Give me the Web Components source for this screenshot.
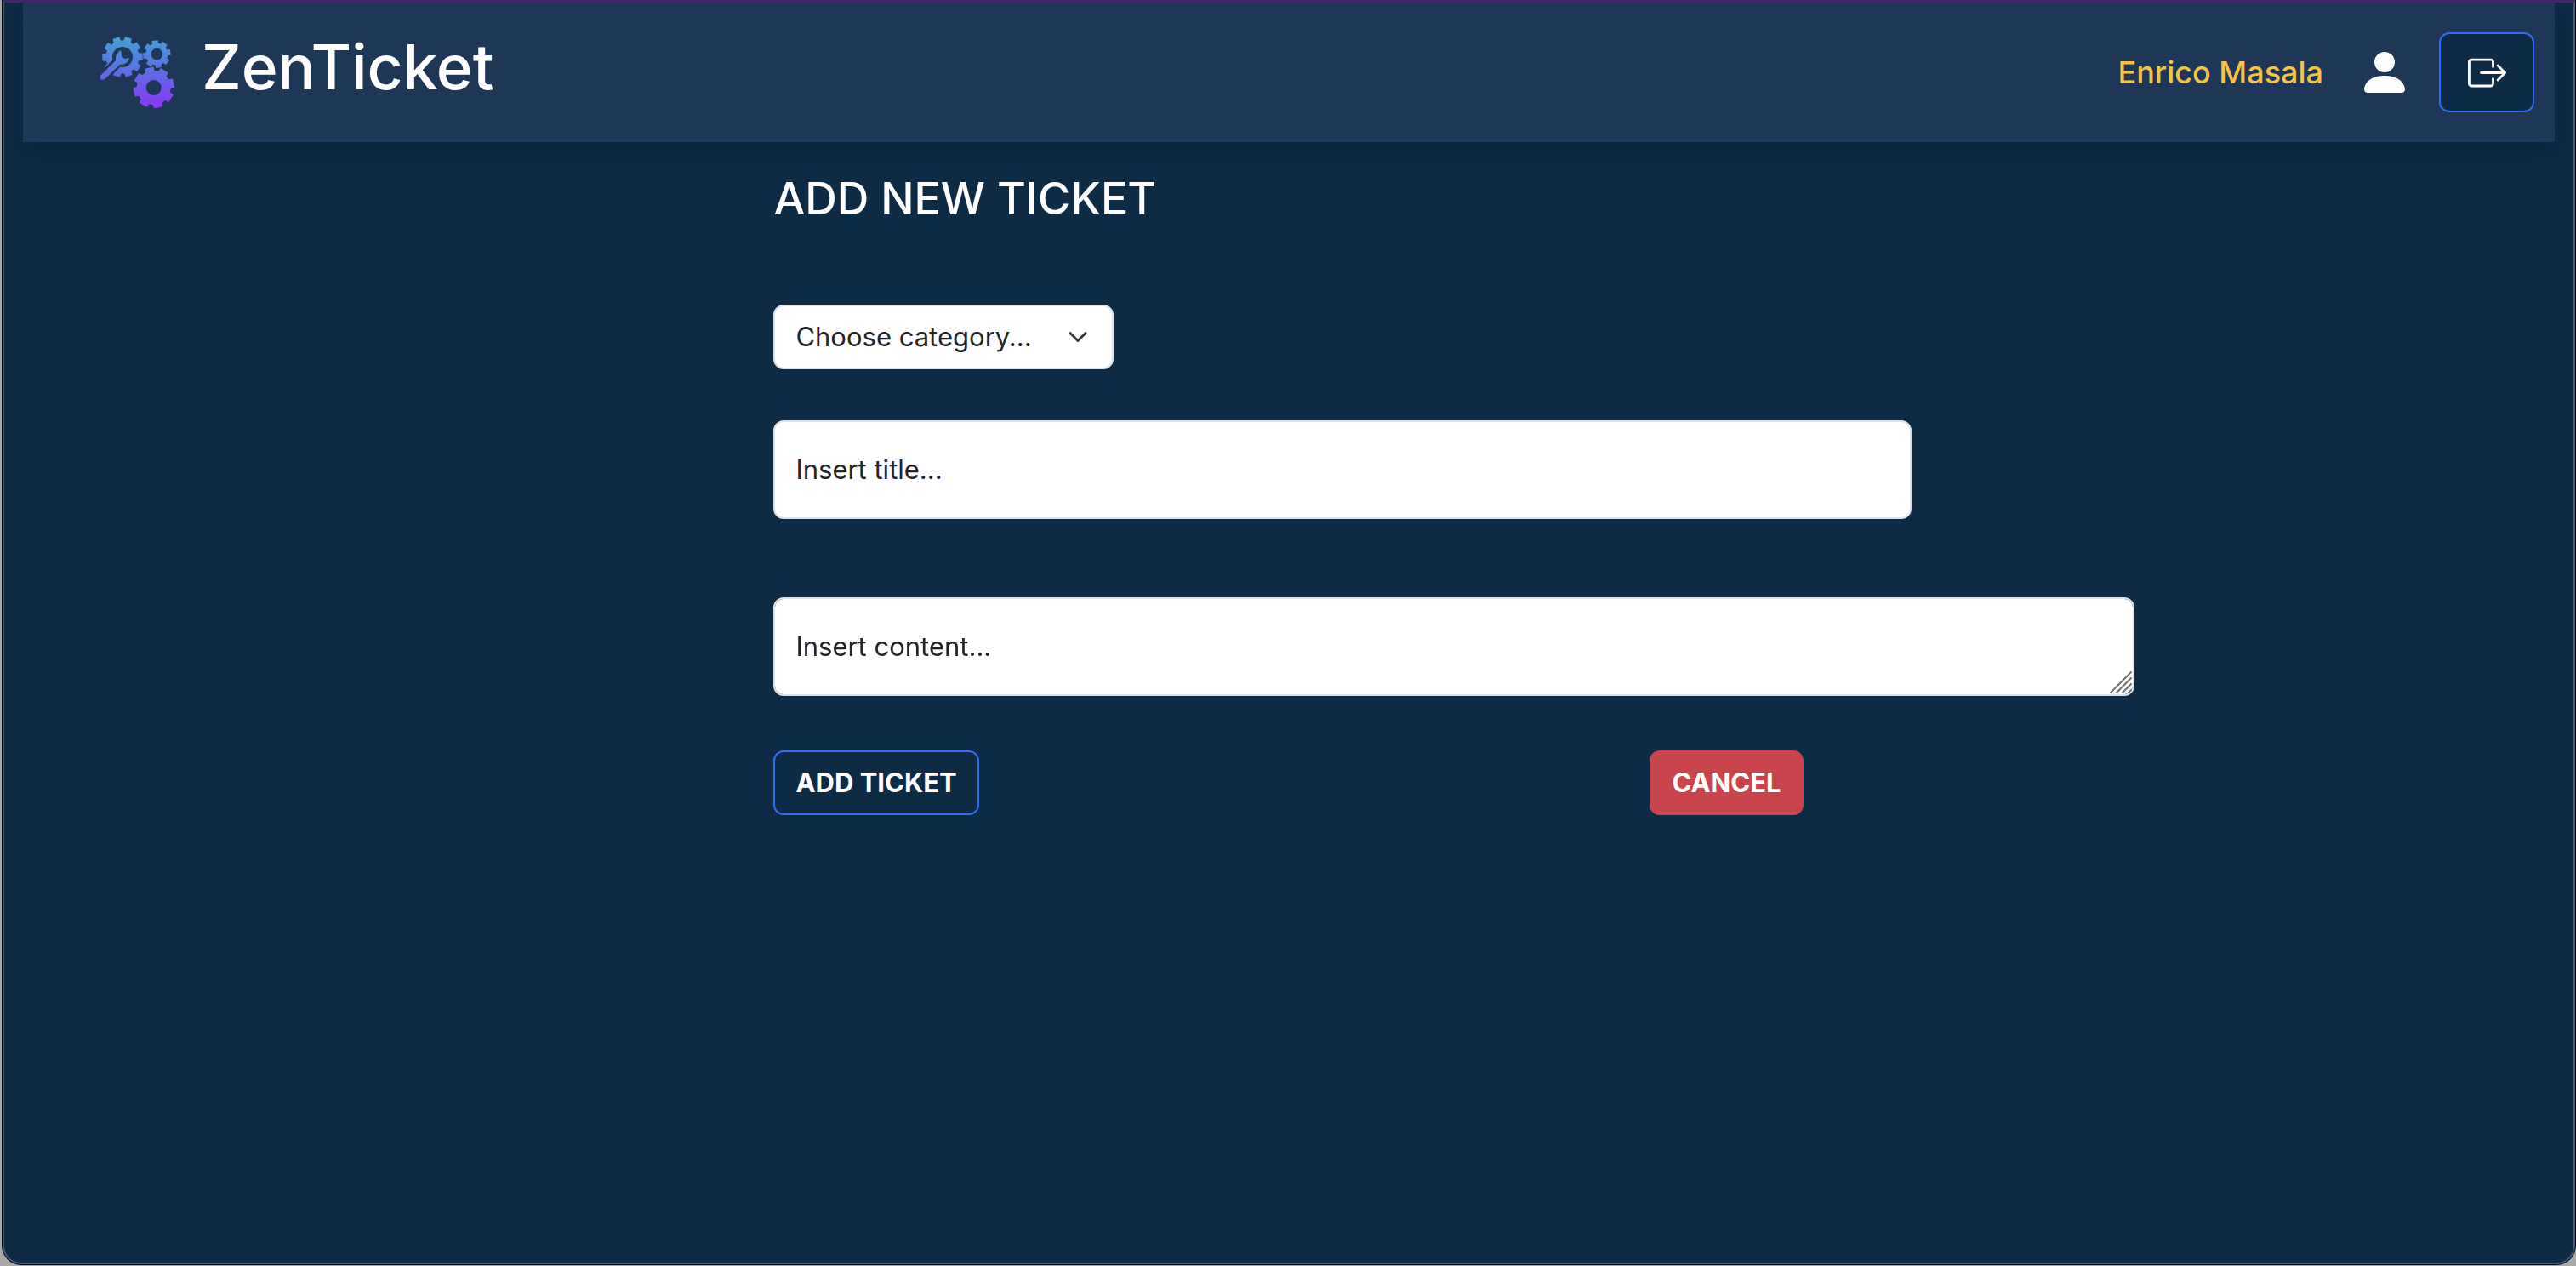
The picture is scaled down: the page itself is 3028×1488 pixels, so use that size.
<!DOCTYPE html>
<html lang="en">
<head>
<meta charset="utf-8">
<meta name="viewport" content="width=device-width, initial-scale=1">
<title>ZenTicket</title>
<style>
  :root {
    --bg: #0e2b45;
    --bar: #1e3756;
    --blue: #316cf4;
    --danger: #ca444b;
    --gold: #f6c344;
    --ink: #212529;
    --line: #dee2e6;
  }
  * { box-sizing: border-box; }
  body {
    margin: 0;
    min-height: 100vh;
    display: flex;
    background: #a9a9a9;
    color: #fff;
    font: 400 31px/48px Inter, "Liberation Sans", sans-serif;
  }
</style>
</head>
<body>
<zen-window>
  <zen-header brand="ZenTicket" user="Enrico Masala"></zen-header>
  <zen-ticket-form heading="ADD NEW TICKET">
    <zen-select text="Choose category..."></zen-select>
    <zen-field class="title" text="Insert title..."></zen-field>
    <zen-field class="content" text="Insert content..." multiline></zen-field>
    <zen-button slot="actions">ADD TICKET</zen-button>
    <zen-button slot="actions" variant="danger">CANCEL</zen-button>
  </zen-ticket-form>
</zen-window>

<script>
const define = (name, render, css) => customElements.define(name, class extends HTMLElement {
  connectedCallback() {
    if (this.shadowRoot) return;
    this.attachShadow({ mode: 'open' }).innerHTML =
      `<style>*{box-sizing:border-box}${css}</style>${render(this)}`;
  }
});

// Outline of a cog: teeth as trapezoids around a ring, with a round hole.
function gear(cx, cy, outer, root, hole, teeth, turn) {
  const pt = (r, deg) => {
    const a = (deg - 90) * Math.PI / 180;
    return (cx + r * Math.cos(a)).toFixed(2) + ' ' + (cy + r * Math.sin(a)).toFixed(2);
  };
  const step = 360 / teeth;
  let d = '';
  for (let i = 0; i < teeth; i++) {
    const a = turn + i * step;
    d += (i ? 'L' : 'M') + pt(root, a - step * .36) + 'L' + pt(outer, a - step * .27) +
         'L' + pt(outer, a + step * .27) + 'L' + pt(root, a + step * .36);
  }
  return d + `ZM${cx - hole} ${cy}a${hole} ${hole} 0 1 0 ${2 * hole} 0a${hole} ${hole} 0 1 0 ${-2 * hole} 0Z`;
}

define('zen-window', () => `<div class="pane"><slot></slot></div>`, `
  :host { flex: 1; display: flex; padding: 0 0 1px 2px; }
  .pane {
    flex: 1; min-width: 0; margin: 0 1px 1px 1px; padding: 0 22px;
    background: var(--bg);
    border: solid #44597a; border-width: 3px 2px 2px; border-top-color: #3f2767;
    border-radius: 0 0 22px 22px;
    box-shadow: 0 0 0 1px #05080c;
    overflow: clip;
  }
`);

define('zen-logo', () => `
  <svg viewBox="0 0 88 84" width="88" height="84" aria-hidden="true">
    <defs>
      <linearGradient id="g" gradientUnits="userSpaceOnUse" x1="0" y1="0" x2="0" y2="84">
        <stop offset="0" stop-color="#479fd3"/><stop offset=".25" stop-color="#4f86dd"/>
        <stop offset=".5" stop-color="#5f6be6"/><stop offset="1" stop-color="#8b35f5"/>
      </linearGradient>
      <mask id="m" maskUnits="userSpaceOnUse" x="-4" y="-4" width="96" height="92">
        <rect x="-4" y="-4" width="96" height="92" fill="#fff"/>
        <path d="M-2 54L25 26" stroke="#000" stroke-width="12" fill="none"/>
      </mask>
    </defs>
    <path mask="url(#m)" fill="url(#g)" fill-rule="evenodd" d="${gear(27, 24, 24, 19.5, 12, 10, 17)}"/>
    <path fill="url(#g)" fill-rule="evenodd" d="${gear(67.3, 20.6, 16.5, 13, 6.8, 8, -8)}"/>
    <path fill="url(#g)" fill-rule="evenodd" d="${gear(63.7, 60, 24.5, 20, 9, 8, -13)}"/>
    <path fill="url(#g)" d="M1 46L19 28Q18 20 25 16L26 24L29 26L35 25Q33 33 24 33L6 50Q3 51 1 50Z"/>
  </svg>`, `
  :host { display: block; } svg { display: block; }
`);

define('zen-header', el => `
  <header>
    <a class="brand" href="#"><zen-logo></zen-logo><span>${el.getAttribute('brand')}</span></a>
    <nav>
      <span class="user">${el.getAttribute('user')}</span>
      <svg width="64" height="64" viewBox="0 0 16 16" fill="currentColor" aria-hidden="true"><path d="M3 14s-1 0-1-1 1-4 6-4 6 3 6 4-1 1-1 1zm5-6a3 3 0 1 0 0-6 3 3 0 0 0 0 6"/></svg>
      <button type="button" aria-label="Log out">
        <svg width="45" height="45" viewBox="0 0 16 16" fill="currentColor" aria-hidden="true"><path d="M10 12.5a.5.5 0 0 1-.5.5h-8a.5.5 0 0 1-.5-.5v-9a.5.5 0 0 1 .5-.5h8a.5.5 0 0 1 .5.5v2a.5.5 0 0 0 1 0v-2A1.5 1.5 0 0 0 9.5 2h-8A1.5 1.5 0 0 0 0 3.5v9A1.5 1.5 0 0 0 1.5 14h8a1.5 1.5 0 0 0 1.5-1.5v-2a.5.5 0 0 0-1 0z"/><path d="M15.854 8.354a.5.5 0 0 0 0-.708l-3-3a.5.5 0 0 0-.708.708L14.293 7.5H5.5a.5.5 0 0 0 0 1h8.793l-2.147 2.146a.5.5 0 0 0 .708.708z"/></svg>
      </button>
    </nav>
  </header>`, `
  :host { display: block; }
  header {
    display: flex; justify-content: space-between; align-items: center;
    height: 164px; padding: 0 24px 0 90px;
    background: var(--bar); box-shadow: 0 8px 24px rgba(0, 0, 0, .2);
  }
  .brand { display: flex; align-items: center; gap: 32px; color: inherit; text-decoration: none; }
  .brand span { font-size: 73px; line-height: 96px; font-weight: 500; padding-bottom: 12px; }
  nav { display: flex; align-items: center; }
  .user { color: var(--gold); font-size: 36px; font-weight: 500; margin-right: 40px; }
  svg { display: block; }
  button {
    display: grid; place-items: center; width: 112px; height: 94px; margin-left: 32px; padding: 0;
    color: inherit; background: var(--bg); border: 2px solid var(--blue); border-radius: 12px;
  }
`);

define('zen-ticket-form', el => `
  <form>
    <h2>${el.getAttribute('heading')}</h2>
    <slot></slot>
    <div class="actions"><slot name="actions"></slot></div>
  </form>`, `
  :host { display: block; padding: 35px 0 48px calc(30vw - 26px); }
  form { display: flex; flex-direction: column; align-items: flex-start; max-width: 1600px; }
  h2 { margin: 0 0 92px; font-size: 52px; line-height: 64px; font-weight: 500; }
  ::slotted(.title) { width: 1338px; max-width: 100%; margin-top: 60px; }
  ::slotted(.content) { width: 100%; margin-top: 92px; }
  .actions { width: 100%; display: grid; grid-template-columns: 103fr 57fr; justify-items: start; margin-top: 64px; }
`);

define('zen-select', el => `
  <select aria-label="Category"><option>${el.getAttribute('text')}</option></select>
  <svg width="24" height="24" viewBox="0 0 16 16" aria-hidden="true"><path fill="none" stroke="#343a40" stroke-linecap="round" stroke-linejoin="round" stroke-width="2" d="m2 5 6 6 6-6"/></svg>`, `
  :host { display: grid; width: 400px; align-items: center; }
  select, svg { grid-area: 1 / 1; }
  select {
    appearance: none; width: 100%; height: 76px; padding: 0 72px 0 24px;
    font: inherit; color: var(--ink); background: #fff;
    border: 2px solid var(--line); border-radius: 12px;
  }
  svg { justify-self: end; margin-right: 30px; pointer-events: none; }
`);

define('zen-field', el => {
  const multi = el.hasAttribute('multiline');
  return `
    ${multi ? '<textarea id="f"></textarea>' : '<input id="f" type="text">'}
    <label for="f">${el.getAttribute('text')}</label>
    ${multi ? '<svg width="26" height="26" viewBox="0 0 26 26" aria-hidden="true"><path fill="none" stroke="#707070" stroke-width="2" stroke-linecap="round" d="M1 25L25 1M8 25L25 8M15 25L25 15M22 25L25 22"/></svg>' : ''}`;
}, `
  :host { display: grid; align-items: center; }
  input, textarea, label, svg { grid-area: 1 / 1; }
  input, textarea {
    display: block; width: 100%; height: 116px; margin: 0; padding: 34px 24px;
    font: inherit; color: var(--ink); background: #fff;
    border: 2px solid var(--line); border-radius: 12px; resize: none;
  }
  label { justify-self: start; margin-left: 26px; color: var(--ink); pointer-events: none; }
  svg { place-self: end; margin: 0 3px 3px 0; pointer-events: none; }
`);

define('zen-button', () => `<button type="button"><slot></slot></button>`, `
  :host { display: block; }
  button {
    height: 76px; padding: 0 24px; font: inherit; font-weight: 700; color: #fff;
    background: var(--bg); border: 2px solid var(--blue); border-radius: 12px;
  }
  :host([variant=danger]) button { background: var(--danger); border-color: var(--danger); }
`);
</script>
</body>
</html>
